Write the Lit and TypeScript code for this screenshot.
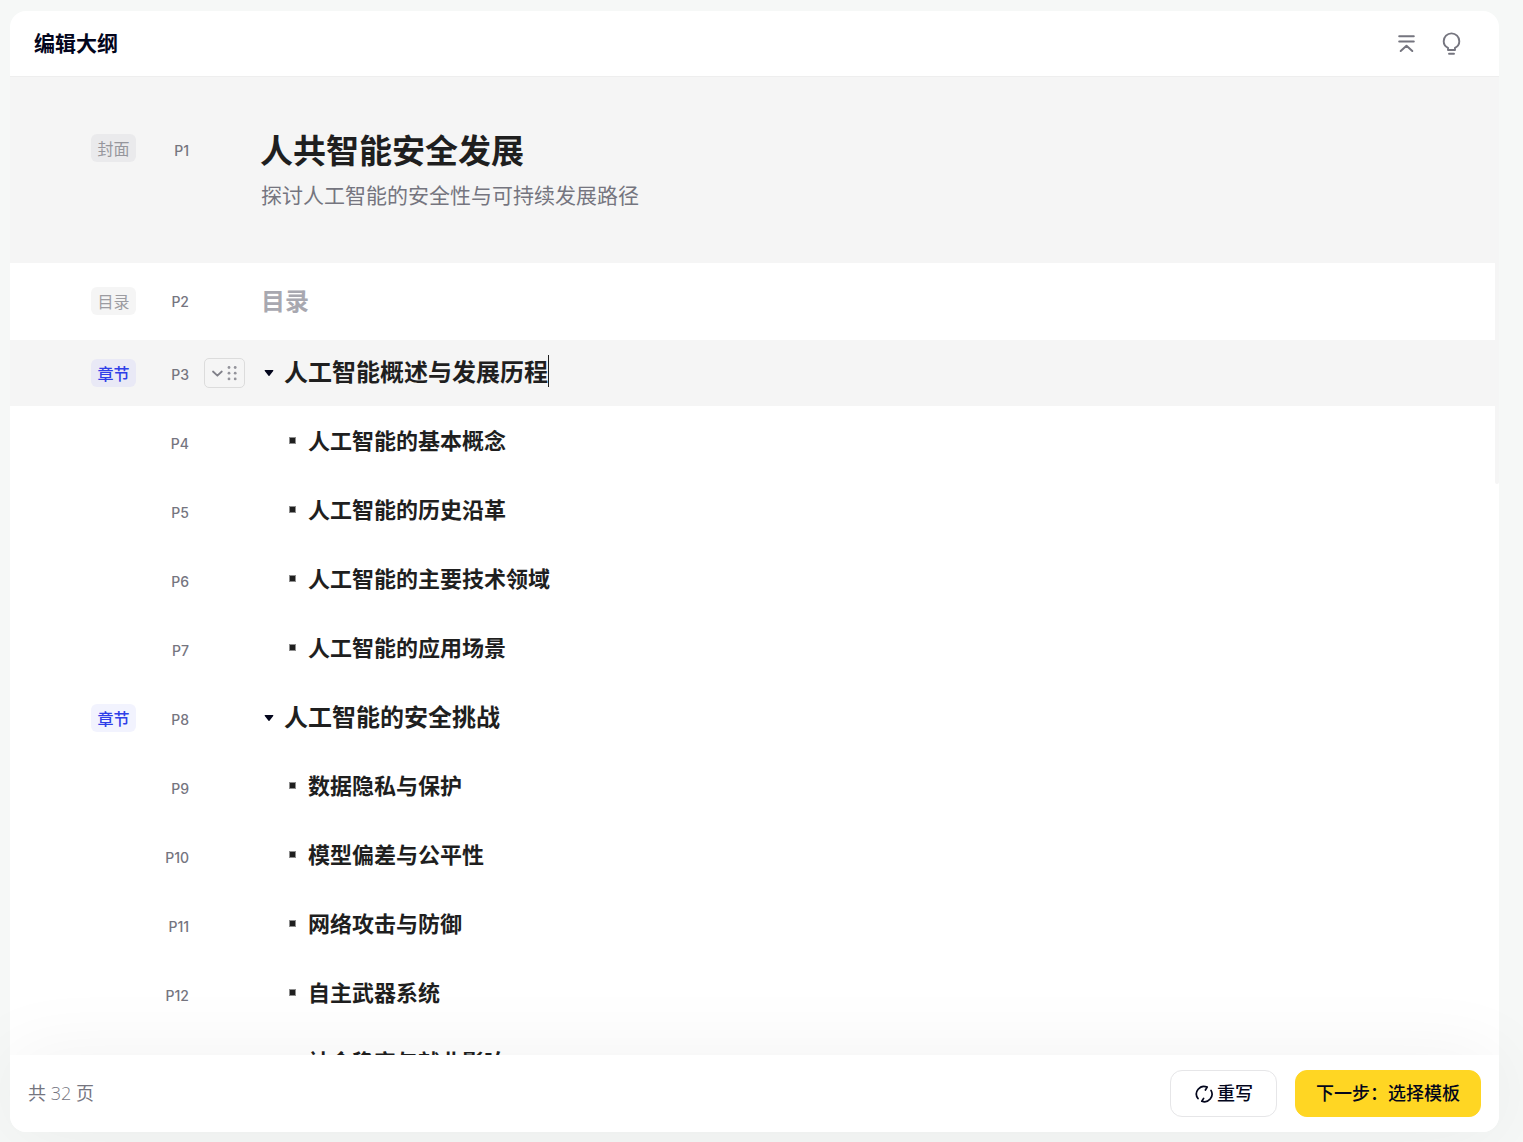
import { LitElement, html, css, nothing } from "lit";
import { customElement, property } from "lit/decorators.js";

interface Chapter {
  title: string;
  editing?: boolean;
  items: string[];
}

interface NumberedChapter extends Chapter {
  page: number;
}

const CHAPTERS: Chapter[] = [
  {
    title: "人工智能概述与发展历程",
    editing: true,
    items: [
      "人工智能的基本概念",
      "人工智能的历史沿革",
      "人工智能的主要技术领域",
      "人工智能的应用场景",
    ],
  },
  {
    title: "人工智能的安全挑战",
    items: [
      "数据隐私与保护",
      "模型偏差与公平性",
      "网络攻击与防御",
      "自主武器系统",
      "社会稳定与就业影响",
    ],
  },
];

// The cover and the table of contents take the first two pages.
const FIRST_CHAPTER_PAGE = 3;

function numberChapters(chapters: Chapter[]): NumberedChapter[] {
  let page = FIRST_CHAPTER_PAGE;
  return chapters.map((chapter) => {
    const numbered = { ...chapter, page };
    page += chapter.items.length + 1;
    return numbered;
  });
}

@customElement("outline-row")
export class OutlineRow extends LitElement {
  @property() kind: "cover" | "toc" | "chapter" | "item" = "item";
  @property() badge = "";
  @property({ type: Number }) page = 1;
  @property({ type: Boolean, reflect: true }) active = false;

  static styles = css`
    :host {
      display: block;
    }
    .row {
      display: grid;
      grid-template-columns: 45px 38px 41px minmax(0, 1fr);
      column-gap: 15px;
      align-items: center;
      padding-left: 81px;
      padding-right: 24px;
      box-sizing: border-box;
    }
    .cover {
      align-items: start;
      padding-top: 50px;
      padding-bottom: 53px;
      background: #f5f5f5;
    }
    .cover .badge,
    .cover .page {
      margin-top: 7px;
    }
    .toc {
      min-height: 77px;
      padding-bottom: 2px;
    }
    .chapter {
      min-height: 66px;
    }
    .item {
      min-height: 69px;
    }
    .item .page {
      padding-top: 6px;
    }
    :host([active]) .row {
      background: #f5f5f5;
    }
    .badge {
      grid-column: 1;
      border-radius: 6px;
      background: #f5f5f5;
      color: #9c9ca1;
      font-size: 16px;
      line-height: 28px;
      text-align: center;
    }
    .cover .badge {
      background: #eaeaec;
      color: #96969c;
    }
    .chapter .badge {
      background: #f2f3fe;
      color: #2f3fe8;
      font-weight: 500;
    }
    :host([active]) .badge {
      background: #e9e9f6;
    }
    .page {
      grid-column: 2;
      padding-top: 3px;
      color: #75757f;
      font-family: Inter, "Noto Sans", sans-serif;
      font-size: 14px;
      font-weight: 500;
      line-height: 28px;
      text-align: right;
    }
    .handle {
      grid-column: 3;
      display: flex;
      align-items: center;
      justify-content: center;
      height: 30px;
      padding: 0;
      border: 1px solid #dcdcdc;
      border-radius: 5px;
      background: transparent;
      color: #808089;
    }
    .content {
      grid-column: 4;
      min-width: 0;
    }
  `;

  render() {
    return html`
      <div class="row ${this.kind}">
        ${this.badge ? html`<span class="badge">${this.badge}</span>` : nothing}
        <span class="page">P${this.page}</span>
        ${this.active
          ? html`<button class="handle" type="button" aria-label="移动">
              <svg width="31" height="20" viewBox="0 0 31 20" fill="none" aria-hidden="true">
                <path d="M4 8.500l4.400 4.200 4.400-4.200" stroke="currentColor" stroke-width="1.800" stroke-linecap="round" stroke-linejoin="round" />
                <g fill="#94949b">
                  <circle cx="20" cy="4.500" r="1.400" /><circle cx="26.200" cy="4.500" r="1.400" />
                  <circle cx="20" cy="10.200" r="1.400" /><circle cx="26.200" cy="10.200" r="1.400" />
                  <circle cx="20" cy="15.900" r="1.400" /><circle cx="26.200" cy="15.900" r="1.400" />
                </g>
              </svg>
            </button>`
          : nothing}
        <div class="content"><slot></slot></div>
      </div>
    `;
  }
}

@customElement("app-root")
export class AppRoot extends LitElement {
  @property({ attribute: false }) chapters: Chapter[] = CHAPTERS;
  @property({ type: Number }) total = 32;

  static styles = css`
    :host {
      display: flex;
      box-sizing: border-box;
      height: 100vh;
      padding: 11px 24px 10px 10px;
      overflow: hidden;
      background: #f6f8f7;
      color: #1f1f1f;
      font-family: "Noto Sans CJK SC", "Noto Sans", sans-serif;
    }
    .card {
      flex: 1;
      min-width: 0;
      display: flex;
      flex-direction: column;
      border-radius: 16px;
      background: #fff;
    }
    .header {
      display: flex;
      align-items: center;
      justify-content: space-between;
      height: 65px;
      padding: 0 36px 0 24px;
      border-bottom: 1px solid #eeeeee;
    }
    h1,
    h2,
    h3,
    h4,
    p,
    ul {
      margin: 0;
      padding: 0;
    }
    .heading {
      padding-bottom: 4px;
      color: #03061c;
      font-size: 21px;
      font-weight: 700;
      line-height: 32px;
    }
    .tools {
      display: flex;
      gap: 21px;
    }
    .tool {
      display: flex;
      padding: 0;
      border: 0;
      background: none;
      color: #75757f;
    }
    .body {
      position: relative;
      flex: 1;
      min-height: 0;
      display: flex;
    }
    .scroller {
      flex: 1;
      min-width: 0;
      overflow-y: auto;
      scrollbar-width: none;
    }
    .thumb {
      position: absolute;
      top: 0;
      right: 0;
      width: 4px;
      height: 407px;
      border-radius: 0 0 2px 2px;
      background: #f5f5f5;
    }
    .title {
      font-size: 33px;
      font-weight: 700;
      line-height: 44px;
    }
    .subtitle {
      margin-top: 8px;
      padding-left: 1px;
      color: #75757f;
      font-size: 21px;
      line-height: 31px;
    }
    .toc-title {
      padding-left: 1px;
      padding-bottom: 2px;
      color: #a8a8b0;
      font-size: 24px;
      font-weight: 700;
      line-height: 32px;
    }
    .chapter-title {
      display: flex;
      align-items: center;
      font-size: 24px;
      font-weight: 700;
      line-height: 32px;
    }
    .text {
      display: flex;
      padding-bottom: 4px;
    }
    .fold {
      display: flex;
      padding: 0;
      margin: 0 10px 0 4px;
      border: 0;
      background: none;
      color: #03061c;
    }
    .caret {
      width: 1px;
      background: #1f1f1f;
    }
    .items {
      padding-bottom: 3px;
      list-style: none;
    }
    .item-title {
      display: flex;
      align-items: center;
      gap: 12px;
      padding-left: 29px;
      font-size: 22px;
      font-weight: 700;
      line-height: 32px;
    }
    .bullet {
      box-sizing: border-box;
      width: 7px;
      height: 7px;
      border: 1px solid #8e8e8e;
      background: #1f1f1f;
    }
    .footer {
      position: relative;
      display: flex;
      align-items: center;
      gap: 18px;
      height: 77px;
      padding: 0 18px;
      border-radius: 0 0 16px 16px;
      background: #fff;
      box-shadow: 0 0 80px rgba(0, 0, 0, 0.06);
    }
    .count {
      flex: 1;
      padding-bottom: 1px;
      color: #75757f;
      font-family: "Open Sans", "Noto Sans CJK SC", sans-serif;
      font-size: 18px;
      line-height: 26px;
    }
    .number {
      font-weight: 300;
    }
    .button {
      display: flex;
      align-items: center;
      justify-content: center;
      gap: 3px;
      box-sizing: border-box;
      height: 47px;
      border: 1px solid #e6e6e8;
      border-radius: 12px;
      padding: 0 23px;
      background: #fff;
      color: #03061c;
      font-family: inherit;
      font-size: 18px;
      font-weight: 500;
      line-height: 26px;
    }
    .button .text {
      padding-bottom: 3px;
    }
    .primary {
      padding: 0 20px;
      border-color: #ffd623;
      background: #ffd623;
    }
  `;

  private renderChapter(chapter: NumberedChapter) {
    return html`
      <section>
        <outline-row kind="chapter" badge="章节" .page=${chapter.page} ?active=${!!chapter.editing}>
          <h3 class="chapter-title">
            <button class="fold" type="button" aria-label="折叠" aria-expanded="true">
              <svg width="10" height="8" viewBox="0 0 10 8" aria-hidden="true">
                <path d="M1.200 1h7.600c.5 0 .7.500.4.900L5.500 6.700a.6.600 0 0 1-1 0L.8 1.900C.5 1.500.7 1 1.200 1z" fill="currentColor" />
              </svg>
            </button>
            <span class="text">${chapter.title}${chapter.editing ? html`<span class="caret"></span>` : nothing}</span>
          </h3>
        </outline-row>
        <ul class="items">
          ${chapter.items.map(
            (item, index) => html`
              <li>
                <outline-row kind="item" .page=${chapter.page + index + 1}>
                  <h4 class="item-title"><span class="bullet"></span><span class="text">${item}</span></h4>
                </outline-row>
              </li>
            `
          )}
        </ul>
      </section>
    `;
  }

  render() {
    return html`
      <main class="card">
        <header class="header">
          <h1 class="heading">编辑大纲</h1>
          <div class="tools">
            <button class="tool" type="button" aria-label="全部收起">
              <svg width="24" height="24" viewBox="0 0 24 24" fill="none" stroke="currentColor" stroke-width="2" stroke-linecap="round" stroke-linejoin="round" aria-hidden="true">
                <path d="M5.200 4.200h14.600M5.200 9.500h14.600M6.700 19l5.800-5.300 5.800 5.300" />
              </svg>
            </button>
            <button class="tool" type="button" aria-label="提示">
              <svg width="24" height="24" viewBox="0 0 24 24" fill="none" stroke="currentColor" stroke-width="1.900" stroke-linecap="round" stroke-linejoin="round" aria-hidden="true">
                <path d="M9 18v-2.200C6.300 14.500 4.700 12 4.700 9.200a7.800 7.800 0 0 1 15.600 0c0 2.800-1.600 5.300-4.300 6.600V18z" />
                <path d="M10 21.700h5" />
              </svg>
            </button>
          </div>
        </header>
        <div class="body">
          <div class="scroller">
            <outline-row kind="cover" badge="封面" .page=${1}>
              <h2 class="title">人共智能安全发展</h2>
              <p class="subtitle">探讨人工智能的安全性与可持续发展路径</p>
            </outline-row>
            <outline-row kind="toc" badge="目录" .page=${2}>
              <h3 class="toc-title">目录</h3>
            </outline-row>
            ${numberChapters(this.chapters).map((chapter) => this.renderChapter(chapter))}
          </div>
          <div class="thumb"></div>
        </div>
        <footer class="footer">
          <span class="count">共 <span class="number">${this.total}</span> 页</span>
          <button class="button" type="button">
            <svg width="20" height="20" viewBox="0 0 20 20" fill="none" stroke="currentColor" stroke-width="1.700" stroke-linecap="round" stroke-linejoin="round" aria-hidden="true">
              <path d="M4 14.600A7.600 7.600 0 0 1 13.200 3.100L11.400 6" />
              <path d="M17 6.400A7.600 7.600 0 0 1 7.800 17.300L9.600 14.400" />
            </svg>
            <span class="text">重写</span>
          </button>
          <button class="button primary" type="button"><span class="text">下一步：选择模板</span></button>
        </footer>
      </main>
    `;
  }
}
